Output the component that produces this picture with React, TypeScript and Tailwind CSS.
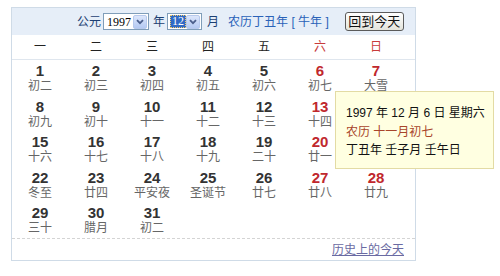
import React from 'react'

const weekdays = ['一', '二', '三', '四', '五', '六', '日']

const days: [number, string][] = [
  [1, '初二'], [2, '初三'], [3, '初四'], [4, '初五'], [5, '初六'], [6, '初七'], [7, '大雪'],
  [8, '初九'], [9, '初十'], [10, '十一'], [11, '十二'], [12, '十三'], [13, '十四'], [14, '十五'],
  [15, '十六'], [16, '十七'], [17, '十八'], [18, '十九'], [19, '二十'], [20, '廿一'], [21, '廿二'],
  [22, '冬至'], [23, '廿四'], [24, '平安夜'], [25, '圣诞节'], [26, '廿七'], [27, '廿八'], [28, '廿九'],
  [29, '三十'], [30, '腊月'], [31, '初二'],
]

// days sitting fully under the tooltip
const covered = [14, 21]

function Arrow() {
  return (
    <span className="flex h-[14px] w-[14px] items-center justify-center rounded-[2px] border border-[#b7c9ec] bg-gradient-to-b from-[#dce6fb] to-[#b4c9f2]">
      <svg width="8" height="6" viewBox="0 0 8 6">
        <path d="M1 1.2 L4 4.2 L7 1.2" fill="none" stroke="#4b5f8c" strokeWidth="1.8" />
      </svg>
    </span>
  )
}

export default function App() {
  return (
    <div className="relative h-[276px] w-[500px] bg-white font-['Liberation_Sans','Noto_Sans_CJK_SC',sans-serif] text-[12px]">
      <div className="ml-[11px] pt-[7px]">
        <div className="flex h-[254px] w-[405px] flex-col border border-[#cfdbe7]">
          {/* Header */}
          <div className="flex h-[27px] items-center bg-[#e6eef8] pl-[65px] text-[#1d3f73]">
            <span>公元</span>
            <div className="ml-[2px] flex h-[17px] w-[46px] items-center justify-between border border-[#7f9db9] bg-white pl-[3px] pr-[1px]">
              <span className="font-['Liberation_Serif',serif] text-[12px] leading-none text-black">1997</span>
              <Arrow />
            </div>
            <span className="ml-[4px]">年</span>
            <div className="ml-[2px] flex h-[17px] w-[35px] items-center justify-between border border-[#7f9db9] bg-white pl-[2px] pr-[1px]">
              <span className="border border-dotted border-[#f3c96a] bg-[#316ac5] px-[1px] font-['Liberation_Serif',serif] text-[12px] leading-[11px] text-white">12</span>
              <Arrow />
            </div>
            <span className="ml-[5px]">月</span>
            <span className="ml-[9px] text-[#2a62b8]">农历丁丑年 [ 牛年 ]</span>
            <button className="ml-[16px] flex h-[19px] w-[59px] items-center justify-center rounded-[3px] border border-[#5b5b5b] bg-gradient-to-b from-[#ffffff] to-[#e4e4dc] text-[13px] leading-none text-[#111]">
              回到今天
            </button>
          </div>

          {/* Weekdays */}
          <div className="grid h-[25px] w-full grid-cols-[repeat(7,56px)] border-b border-[#dfe6ee]">
            {weekdays.map((w, i) => (
              <div key={w} className={`flex items-center justify-center ${i >= 5 ? 'text-[#c83b3b]' : 'text-[#222]'}`}>
                {w}
              </div>
            ))}
          </div>

          {/* Days */}
          <div className="grid w-[392px] grid-cols-[repeat(7,56px)] auto-rows-[35.5px]">
            {days.map(([d, l], i) => {
              const weekend = i % 7 >= 5
              return (
                <div key={d} className={`flex flex-col items-center pt-[2px] ${covered.includes(d) ? 'invisible' : ''}`}>
                  <span className={`text-[15px] font-bold leading-[17px] ${weekend ? 'text-[#c0282d]' : 'text-[#333]'}`}>{d}</span>
                  <span className="text-[12px] leading-[15px] text-[#666]">{l}</span>
                </div>
              )
            })}
          </div>

          {/* Footer */}
          <div className="mt-auto flex h-[22px] items-center justify-end border-t border-dashed border-[#d4d4d4] pr-[11px]">
            <a href="#" className="text-[12px] text-[#6a6aa2] underline">历史上的今天</a>
          </div>
        </div>
      </div>

      {/* Tooltip */}
      <div className="absolute left-[335px] top-[91px] h-[78px] w-[159px] border border-[#e3dba4] bg-[#ffffe1] pl-[10px] pt-[12px] text-[12px] leading-[18.5px] text-[#111]">
        <div>1997 年 12 月 6 日 星期六</div>
        <div className="text-[#a8452a]">农历 十一月初七</div>
        <div>丁丑年 壬子月 壬午日</div>
      </div>
    </div>
  )
}
